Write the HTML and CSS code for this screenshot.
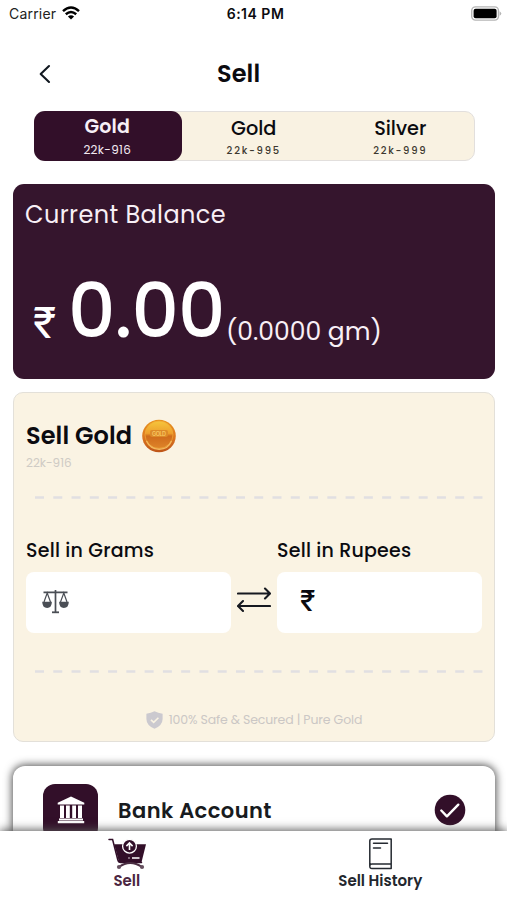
FILE: index.html
```
<!DOCTYPE html>
<html lang="en">
<head>
<meta charset="utf-8">
<meta name="viewport" content="width=device-width, initial-scale=1">
<title>Sell</title>
<link rel="stylesheet" href="styles.css">
</head>
<body>
<div class="screen">
  <header class="status">
    <div class="carrier"><span class="carrier-name">Carrier</span>
      <svg width="18" height="14" viewBox="0 0 18 14" fill="none" stroke="#000" stroke-width="2.5"><path d="M1 5.1Q9-2 17 5.1M3.8 8.2Q9 3.8 14.2 8.2"/><path d="M9 13.5 5.9 10.4Q9 7.9 12.1 10.4Z" fill="#000" stroke="none"/></svg>
    </div>
    <span class="time">6:14 PM</span>
    <svg class="battery" width="31" height="15" viewBox="0 0 31 15"><rect x=".7" y=".9" width="26.8" height="13.2" rx="3.8" fill="#fff" stroke="#b5b5b5" stroke-width="1.4"/><rect x="2.6" y="2.8" width="23" height="9.4" rx="2" fill="#000"/><path d="M28.6 5.2Q32 7.5 28.6 9.8Z" fill="#b5b5b5"/></svg>
  </header>

  <div class="titlebar">
    <svg class="back" width="14" height="20" viewBox="0 0 14 20" fill="none" stroke="#111820" stroke-width="2.1" stroke-linecap="round" stroke-linejoin="round"><path d="M10 2 1.7 10 10 18"/></svg>
    <h1>Sell</h1>
  </div>

  <nav class="tabs">
    <div class="tab active"><b>Gold</b><small>22k-916</small></div>
    <div class="tab"><b>Gold</b><small>22k-995</small></div>
    <div class="tab"><b>Silver</b><small>22k-999</small></div>
  </nav>

  <section class="balance">
    <h2>Current Balance</h2>
    <div class="amount"><span class="rupee">₹</span><span class="value">0.00</span><span class="grams">(0.0000 gm)</span></div>
  </section>

  <section class="sell">
    <div class="sell-head"><h3>Sell Gold</h3>
      <svg width="34" height="34" viewBox="0 0 34 34">
        <defs><linearGradient id="rim" x1="0" y1="0" x2="0" y2="1"><stop offset="0" stop-color="#e8941c"/><stop offset=".55" stop-color="#dc7620"/><stop offset="1" stop-color="#bd5418"/></linearGradient>
        <linearGradient id="face" x1="0" y1="0" x2="0" y2="1"><stop offset="0" stop-color="#f5c63c"/><stop offset=".45" stop-color="#ee9f2c"/><stop offset=".55" stop-color="#cf6b1b"/><stop offset="1" stop-color="#de8429"/></linearGradient></defs>
        <ellipse cx="17" cy="17" rx="16.8" ry="16.3" fill="url(#rim)"/>
        <ellipse cx="17" cy="15.7" rx="14" ry="13.7" fill="url(#face)" stroke="#f0a93a" stroke-width=".7"/>
        <path d="M4.5 22Q8 30 17 30.2T29.5 22" fill="none" stroke="#f3b85c" stroke-width="1.4"/>
        <rect x="8" y="11" width="18" height="7" rx="2" fill="#dc8a29"/>
        <text x="17" y="16.8" text-anchor="middle" textLength="14" font-family="Inter, sans-serif" font-size="5.5" font-weight="600" fill="#f8c862">GOLD</text>
      </svg>
    </div>
    <p class="karat">22k-916</p>
    <svg class="dashes" width="448" height="3" viewBox="0 0 448 3"><path d="M0 1.5H448" stroke="#e1dfe2" stroke-width="2.4" stroke-dasharray="9 9.27"/></svg>
    <div class="fields">
      <div class="field"><label>Sell in Grams</label>
        <div class="input">
          <svg width="27" height="25" viewBox="0 0 27 25" fill="none" stroke="#4a4e55" stroke-width="1.2"><path d="M1.5 3.3H25.5M13.5 1V23" stroke-width="1.7"/><path d="M10 23.3H17" stroke-width="1.8"/><path d="M2 13 5.2 4 8.5 13M18.5 13 21.8 4 25 13"/><path d="M.2 12.8H9.9Q9.8 19 5.1 19T.2 12.8ZM17.1 12.8H26.8Q26.7 19 21.9 19T17.1 12.8Z" fill="#4a4e55" stroke="none"/></svg>
        </div></div>
      <svg class="swap" width="34" height="26" viewBox="0 0 34 26" fill="none" stroke="#161920" stroke-width="2.1" stroke-linecap="round" stroke-linejoin="round"><path d="M1 6.5H33M28 1.5 33 6.5 28 11.5M33 19H1M6 14 1 19 6 24"/></svg>
      <div class="field"><label>Sell in Rupees</label>
        <div class="input money"><span>₹</span></div></div>
    </div>
    <svg class="dashes second" width="448" height="3" viewBox="0 0 448 3"><path d="M0 1.5H448" stroke="#e1dfe2" stroke-width="2.4" stroke-dasharray="9 9.27"/></svg>
    <div class="secure">
      <svg width="17" height="18" viewBox="0 0 17 18"><path d="M8.5.3Q12 2.3 16.6 2.7V8Q16.5 14.5 8.5 17.8.5 14.5.4 8V2.7Q5 2.3 8.5.3Z" fill="#cbc9cf"/><path d="m5 8.8 2.7 2.6L12.4 6.7" fill="none" stroke="#faf3e3" stroke-width="1.6"/></svg>
      <span>100% Safe &amp; Secured | Pure Gold</span>
    </div>
  </section>

  <section class="bank">
    <div class="bank-icon"><svg width="28" height="28" viewBox="0 0 28 28" fill="#fff"><path d="M14 .5 27.3 6.7V8.6H.7V6.7Z"/><path d="M3 9.5H7V22H3ZM9 9.5H12.8V22H9ZM15.2 9.5H19V22H15.2ZM21 9.5H25V22H21ZM2 22.5H26V24.5H2ZM.8 25H27.2V27.2H.8Z"/></svg></div>
    <span class="bank-name">Bank Account</span>
    <svg class="check" width="32" height="32" viewBox="0 0 32 32"><circle cx="16" cy="16" r="15.3" fill="#320f29"/><path d="m7.3 16.5 5.6 5.8L24.3 10.7" fill="none" stroke="#fff" stroke-width="2.4" stroke-linecap="round" stroke-linejoin="round"/></svg>
  </section>

  <footer class="bottom">
    <div class="item current">
      <svg class="cart" width="39" height="32" viewBox="0 0 39 32"><path d="M1 1.5H4.6L9.7 21.5Q10.3 24.4 13 24.4H33.5" fill="none" stroke="#320f29" stroke-width="1.5" stroke-linecap="round"/><path d="M6.2 6.2H38L33.6 23.9H11Z" fill="#320f29"/><path d="M11 29Q22 21 34 29" fill="none" stroke="#4b2f43" stroke-width="1.8"/><circle cx="11" cy="29" r="2.1" fill="#66505f"/><circle cx="34" cy="29" r="2.1" fill="#66505f"/><circle cx="21.5" cy="8.2" r="6.9" fill="#320f29" stroke="#fff" stroke-width="1.3"/><path d="M21.5 12V5.3M18.4 8.1 21.5 5 24.6 8.1M24 20H31.5M20.5 20H21.5" fill="none" stroke="#fff" stroke-width="1.6"/></svg>
      <span>Sell</span>
    </div>
    <div class="item">
      <svg width="23" height="32" viewBox="0 0 23 32" fill="none" stroke="#252a31" stroke-width="1.5" stroke-linecap="round" stroke-linejoin="round"><path d="M3 .9H22.2V30.5H3Q.8 30.5 .8 28.3V3Q.8.9 3 .9ZM.8 28Q.8 26 3 26H22.2M4.5 5.2H18.5M4.5 10H11.5"/></svg>
      <span>Sell History</span>
    </div>
  </footer>
</div>
</body>
</html>
```
FILE: styles.css
```
* { box-sizing: border-box; }
body { margin: 0; font-family: Poppins, Inter, "Liberation Sans", sans-serif; color: #0b0b10; background: #fff; }
h1, h2, h3, p { margin: 0; }
svg { display: block; flex: none; }
.screen { width: 507px; height: 900px; overflow: hidden; display: flex; flex-direction: column; white-space: nowrap; }
.status { flex: none; height: 28px; padding: 0 6px 2px 9px; display: grid; grid-template-columns: 1fr auto 1fr; align-items: center; font-family: Inter, "Liberation Sans", sans-serif; }
.carrier { display: flex; align-items: center; gap: 6px; font-size: 14px; }
.carrier-name { letter-spacing: .2px; color: #222; }
.time { font-size: 14px; font-weight: 600; letter-spacing: .5px; margin-right: -1px; }
.battery { justify-self: end; margin-right: -1px; }
.titlebar { flex: none; height: 83px; display: grid; grid-template-columns: 178px auto 1fr; align-items: center; padding: 8px 0 0 39px; }
h1 { font-size: 24px; line-height: 30px; font-weight: 600; letter-spacing: .1px; }
.tabs { flex: none; width: 441px; height: 50px; margin-left: 34px; background: #f9f2e2; border: 1px solid #e2dfdd; border-radius: 10px; display: grid; grid-template-columns: repeat(3, 146.5px); }
.tab { display: flex; flex-direction: column; align-items: center; margin: -1px 1px 0 -1px; height: 50px; padding-top: 6px; }
.tab b { font-size: 19.3px; line-height: 24px; font-weight: 500; }
.tab small { font-size: 10px; line-height: 12px; margin-top: 4px; font-weight: 500; letter-spacing: 1.75px; color: #3c3830; }
.tab.active { margin-right: 0; background: #320f29; border-radius: 11px; color: #f7eff6; padding: 4px 1px 0 0; }
.active b { font-size: 19px; font-weight: 600; letter-spacing: .2px; }
.tab.active small { font-size: 12px; line-height: 14px; letter-spacing: .3px; font-weight: 400; color: #f3e9f1; }
.balance { flex: none; width: 482px; height: 195px; margin: 23px 0 0 13px; border-radius: 11px; background: #35152d; color: #fff; padding: 15px 12px; }
h2 { font-size: 24px; line-height: 32px; font-weight: 400; color: #f8eff6; letter-spacing: .4px; }
.amount { display: flex; align-items: baseline; padding: 35px 0 0 8px; line-height: 90px; }
.rupee { font-family: Inter, sans-serif; font-size: 43px; font-weight: 400; width: 35px; transform: translateY(1px); }
.value { font-size: 74px; font-weight: 500; width: 158px; letter-spacing: -.9px; }
.grams { font-size: 25px; letter-spacing: 0; color: #f8eff6; transform: translateY(3px); }
.sell { flex: none; width: 482px; height: 350px; margin: 13px 0 0 13px; border: 1px solid #e3e0d9; border-radius: 10px; background: #faf3e3; padding: 26px 12px 0; }
.sell-head { display: flex; align-items: center; gap: 9px; height: 34px; }
h3 { width: 107px; font-size: 24px; line-height: 34px; font-weight: 600; letter-spacing: .1px; }
.karat { font-size: 12px; line-height: 16px; margin-top: 2px; color: #cfcbc5; }
.dashes { margin: 25px 0 0 9px; }
.fields { margin-top: 39px; display: grid; grid-template-columns: 204.5px 46.5px 204.5px; align-items: end; }
.field label { display: block; font-size: 19px; line-height: 26px; font-weight: 500; letter-spacing: .22px; }
.input { height: 61px; margin-top: 8px; border-radius: 8px; background: #fff; display: flex; align-items: center; padding: 0 0 2px 16px; }
.money { padding: 0 0 4px 23px; font-family: Inter, sans-serif; font-size: 28px; font-weight: 500; }
.swap { margin: 0 0 20px 6px; }
.second { margin-top: 37px; }
.secure { display: flex; gap: 6px; align-items: center; justify-content: center; margin-top: 38px; font-size: 12.5px; line-height: 18px; letter-spacing: -.15px; color: #cbc7c5; }
.bank { flex: none; width: 482px; height: 110px; margin: 24px 0 0 13px; border-radius: 12px; background: #fff; box-shadow: 0 0 8px 1px #4d4d4d; display: grid; grid-template-columns: 75px 1fr 32px; padding: 18px 29px 0 30px; }
.bank-icon { width: 55px; height: 56px; border-radius: 12px; background: #320f29; display: flex; align-items: center; justify-content: center; }
.bank-icon svg { margin-top: -4px; }
.bank-name { font-size: 21px; line-height: 53px; font-weight: 600; letter-spacing: .45px; color: #181b20; }
.check { margin-top: 10px; }
.bottom { flex: none; height: 69px; margin-top: -45px; background: #fff; box-shadow: 0 -1px 9px #555; display: grid; grid-template-columns: 1fr 1fr; position: relative; }
.item { display: flex; flex-direction: column; align-items: center; padding-top: 7px; font-size: 15px; font-weight: 600; color: #23272e; }
.item span { line-height: 20px; margin-top: 1px; }
.current { color: #4b2641; }
.cart { margin-left: 2px; }
```
